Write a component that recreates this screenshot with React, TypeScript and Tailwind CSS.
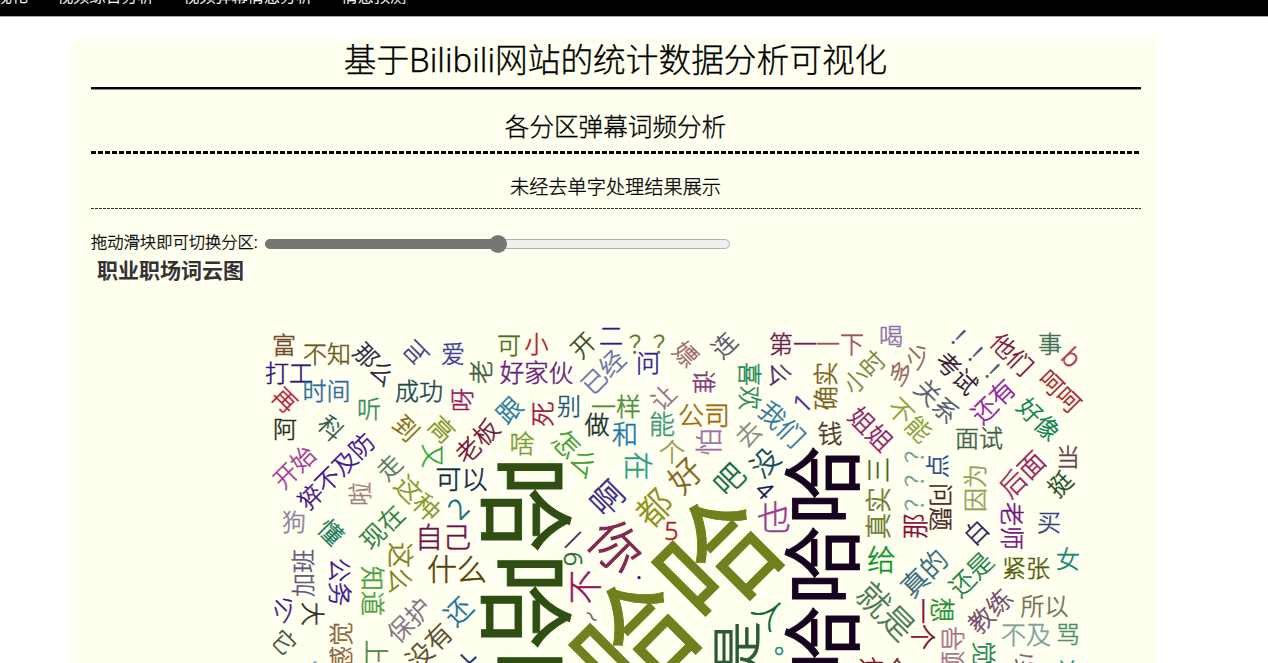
type Word = [text: string, x: number, y: number, size: number, angle: number, color: string];

const words: Word[] = [
  ['哈哈哈', 526.5, 602, 97, 90, '#2f4f12'],
  ['哈哈哈', 822, 565, 80, -90, '#17031f'],
  ['哈哈哈', 634, 640, 117, -45, '#6e811c'],
  ['是', 737, 647, 51, -90, '#2c5a38'],
  ['你', 616, 546, 51, 45, '#84284e'],
  ['富', 284, 345, 24, 0, '#704a28'],
  ['不知', 327, 354, 24, 0, '#6b5a18'],
  ['那么', 375, 364, 24, 45, '#23243f'],
  ['叫', 416, 353, 24, -45, '#3c3f80'],
  ['爱', 453, 354, 24, 0, '#3b3f98'],
  ['老', 481, 372, 24, -90, '#3f6040'],
  ['打工', 289, 373, 24, 0, '#33137a'],
  ['时间', 326.5, 391, 24, 0, '#2a6c9e'],
  ['成功', 419, 391, 24, 0, '#1b4a55'],
  ['呀', 462, 400, 24, -90, '#98185a'],
  ['再', 285, 400, 24, 45, '#b5203c'],
  ['听', 369, 409, 24, 0, '#35905f'],
  ['跟', 509, 410, 25, -45, '#2078a0'],
  ['阿', 285, 429, 24, 0, '#1c3014'],
  ['科', 331, 428, 24, 45, '#2f5a48'],
  ['到', 406, 428, 25, 45, '#8a6c0c'],
  ['高', 442, 429, 25, 45, '#7a9420'],
  ['老板', 477, 441, 25, -45, '#701038'],
  ['又', 433, 456, 24, 90, '#30a030'],
  ['开始', 294, 467, 24, -45, '#a03a98'],
  ['猝不及防', 336, 471, 24, -45, '#401090'],
  ['走', 389, 467, 24, -45, '#4c7860'],
  ['可以', 461.5, 479.5, 26, 0, '#0a2848'],
  ['啦', 360, 494, 24, -90, '#a07c78'],
  ['这种', 418, 498, 26, 45, '#849828'],
  ['2', 458, 508, 28, -45, '#107080'],
  ['狗', 294, 522, 24, 0, '#8a7fa0'],
  ['懂', 331, 532, 24, 45, '#187858'],
  ['现在', 382, 527, 25, -45, '#2a8038'],
  ['自己', 443, 537, 28, 0, '#6e0e48'],
  ['什么', 457, 569, 30, 0, '#574003'],
  ['这么', 401, 568, 26, 90, '#808010'],
  ['加班', 303, 573, 24, -90, '#5c5480'],
  ['公务', 340.5, 582, 24, 90, '#3a1090'],
  ['知道', 372, 591, 25, 90, '#48a038'],
  ['少', 284, 608, 24, -45, '#341090'],
  ['大', 313, 614, 24, 90, '#2c2c20'],
  ['保护', 409, 620, 25, -45, '#807088'],
  ['还', 458, 611, 27, -45, '#1a7098'],
  ['没有', 429, 646, 26, -45, '#584820'],
  ['感觉', 340.5, 646, 24, -90, '#8a6038'],
  ['上', 376, 652, 25, 90, '#48803a'],
  ['它', 284, 642, 24, 45, '#405838'],
  ['人', 308, 669, 24, 45, '#6898a8'],
  ['大', 467, 666, 28, 45, '#103080'],
  ['可', 509, 345, 24, 0, '#4a7020'],
  ['小', 536.5, 344, 24, 0, '#b02020'],
  ['开', 583, 345, 24, -45, '#2c4c14'],
  ['二', 611, 335.5, 24, 0, '#301890'],
  ['？？', 653, 343.5, 24, 0, '#587820'],
  ['问', 648, 363, 24, 0, '#2c20a0'],
  ['已经', 603, 372, 25, -45, '#6870a8'],
  ['嫖', 686, 354, 24, 45, '#a06868'],
  ['连', 724, 345, 24, -45, '#58546c'],
  ['好家伙', 536.5, 373, 24.5, 0, '#682080'],
  ['谁', 704, 382, 24, 90, '#803878'],
  ['让', 663, 397, 24, -45, '#906890'],
  ['别', 569, 406, 24, 0, '#1f5878'],
  ['死', 542, 414, 25, -90, '#98103c'],
  ['做', 597, 424, 25, 0, '#183028'],
  ['一样', 616, 406, 25, 0, '#509038'],
  ['公司', 704, 415, 26, 0, '#a0680c'],
  ['能', 662, 424, 26, 0, '#409878'],
  ['和', 625, 434, 26, 0, '#1878a8'],
  ['怕', 709, 442, 27, -90, '#a070a8'],
  ['啥', 522, 443, 25, 0, '#78a030'],
  ['怎么', 576, 453, 27, 45, '#40a030'],
  ['个', 672, 452, 26, 0, '#989848'],
  ['在', 638, 466, 29, 90, '#2c9c84'],
  ['好', 685, 475, 33, -45, '#88641c'],
  ['吧', 729, 479, 30, -45, '#0c6840'],
  ['啊', 607, 498, 33, -45, '#382888'],
  ['都', 654, 508, 35, -45, '#909018'],
  ['5', 671.5, 530, 25, 0, '#b81828'],
  ['一', 573, 540, 24, -45, '#482850'],
  ['6', 574, 559, 26, 90, '#287030'],
  ['不', 585, 587, 35, -90, '#981460'],
  ['.', 639, 568, 28, 0, '#180c80'],
  ['~', 592, 616, 25, 45, '#706078'],
  ['第一', 793, 344, 24, 0, '#702050'],
  ['一下', 840, 344, 24, 0, '#a05058'],
  ['喝', 891, 336, 24, 0, '#8c74a8'],
  ['么', 781, 375, 24, 90, '#482058'],
  ['喜欢', 750, 386, 24, 90, '#208850'],
  ['确实', 826, 386, 24.5, -90, '#786018'],
  ['小时', 864, 372, 24, -45, '#788840'],
  ['1', 802, 403, 26, -45, '#502890'],
  ['我们', 782, 424, 26, 45, '#3078a0'],
  ['钱', 830, 433, 25, 0, '#4c3828'],
  ['姐姐', 871, 429, 25, 45, '#901868'],
  ['去', 748, 434, 25, -45, '#808880'],
  ['没', 765, 462, 28, -45, '#0c4858'],
  ['4', 765, 490, 24, 45, '#101c58'],
  ['三', 878, 470, 26, -90, '#3c6010'],
  ['真实', 878, 513, 26, -90, '#687828'],
  ['不能', 910, 420, 25, 45, '#88a038'],
  ['多少', 909, 364, 24, -45, '#906058'],
  ['？？？', 914, 475, 24, -90, '#70a098'],
  ['那', 915, 526, 26, -90, '#880830'],
  ['问题', 941, 507, 24, 90, '#481c20'],
  ['点', 937, 466, 24, -90, '#184488'],
  ['也', 774, 517, 34, 0, '#a03c90'],
  ['给', 881.5, 560, 29, 0, '#089828'],
  ['就是', 886, 611, 33, 45, '#487850'],
  ['人', 770, 613, 31, 45, '#086830'],
  ['。', 787, 643, 26, 0, '#208870'],
  ['这个', 884, 670, 26, 0, '#701828'],
  ['真的', 924, 573, 27, -45, '#30687c'],
  ['！！！', 980, 358, 24, 45, '#485878'],
  ['考试', 957, 373, 24, 45, '#301030'],
  ['关系', 937, 401, 25, 45, '#505870'],
  ['他们', 1012, 354, 24, 45, '#801040'],
  ['事', 1050, 344, 24, 0, '#407058'],
  ['b', 1072, 357, 26, 45, '#b83850'],
  ['呵呵', 1060, 391, 24, 45, '#a82428'],
  ['还有', 993, 401, 25, -45, '#9018a0'],
  ['好像', 1039, 419, 24, 45, '#088050'],
  ['面试', 979, 438, 24, 0, '#406044'],
  ['当', 1068, 457, 24, 0, '#684050'],
  ['挺', 1060, 484, 24, -45, '#184820'],
  ['后面', 1022, 474, 26, -45, '#982058'],
  ['因为', 975, 488, 24, -90, '#90a050'],
  ['白', 976, 532, 24, -45, '#242050'],
  ['老师', 1012.5, 526, 24, 90, '#701080'],
  ['买', 1049, 522, 24, 0, '#304080'],
  ['女', 1068, 559, 24, 0, '#108870'],
  ['紧张', 1026, 568, 24, 0, '#506008'],
  ['还是', 971, 574, 25, -45, '#188048'],
  ['想', 942, 610, 25, 90, '#209028'],
  ['一个', 923, 624, 26, 90, '#800828'],
  ['教练', 990, 611, 25, -45, '#704868'],
  ['所以', 1044.5, 606, 24, 0, '#70704c'],
  ['不及', 1026, 634, 25, 0, '#80a098'],
  ['骂', 1068, 634, 24, 0, '#489068'],
  ['领导', 952, 651, 25, -90, '#a07080'],
  ['觉得', 984, 665, 24, 90, '#208050'],
  ['公', 1025, 664, 24, -45, '#805070'],
  ['前', 1067, 672, 24, 0, '#108870'],
];

const CLOUD_X = 91;
const CLOUD_Y = 287;

function WordCloud() {
  return (
    <svg className="block h-[376px] w-[1050px] font-light" viewBox={`${CLOUD_X} ${CLOUD_Y} 1050 376`}>
      {words.map(([text, x, y, size, angle, color], i) => (
        <text
          key={i}
          transform={`translate(${x} ${y}) rotate(${angle})`}
          y={size * 0.38}
          fontSize={size}
          fill={color}
          stroke={color}
          strokeWidth={size > 70 ? 0.9 : size > 50 ? 1.1 : 0.5}
          textAnchor="middle"
          className={size > 70 ? 'font-normal' : undefined}
        >
          {text}
        </text>
      ))}
    </svg>
  );
}

function Slider() {
  return (
    <div className="relative ml-[7px] mt-[3px] flex h-[18px] w-[465px] items-center">
      <div className="h-[10px] w-full rounded-full border border-[#b2b2b2] bg-[#efefef]" />
      <div className="absolute left-0 top-[4px] h-[10px] w-[232px] rounded-l-full bg-[#767676]" />
      <div className="absolute left-[224px] top-0 size-[18px] rounded-full bg-[#767676]" />
    </div>
  );
}

const nav = ['数据可视化', '视频综合分析', '视频弹幕情感分析', '情感预测'];

export default function App() {
  return (
    <div className="h-[663px] w-[1268px] overflow-hidden bg-white font-['Noto_Sans','Noto_Sans_CJK_SC',sans-serif] font-light text-black [-webkit-text-stroke-width:0.3px]">
      <nav className="flex h-[17px] gap-[29px] overflow-hidden border-b border-[#a8a8a8] bg-black text-[16.2px] leading-[24px] text-white">
        {nav.map((label, i) => (
          <a key={label} className={i === 0 ? '-ml-[53px] -mt-[16px] shrink-0' : '-mt-[16px] shrink-0'}>
            {label}
          </a>
        ))}
      </nav>
      <main className="ml-[73px] mt-[21px] h-[625px] w-[1084px] overflow-hidden bg-[#fffff0] pl-[18px] pr-[16px]">
        <h1 className="flex h-[49px] items-center justify-center pb-[5px] pr-px text-[32.7px] leading-none">
          基于Bilibili网站的统计数据分析可视化
        </h1>
        <div className="h-[3px] border-t-2 border-black bg-[#8a8a84]" />
        <h2 className="flex h-[61px] items-center justify-center pr-px pt-[14px] text-[24.6px] leading-none">各分区弹幕词频分析</h2>
        <div className="h-[3px] bg-[repeating-linear-gradient(90deg,#000_0_5px,transparent_5px_7px)]" />
        <h3 className="flex h-[54px] items-center justify-center pr-px pt-[12px] text-[19.2px] leading-none">未经去单字处理结果展示</h3>
        <div className="h-px bg-[repeating-linear-gradient(90deg,#333_0_3px,transparent_3px_4px)]" />
        <div className="mt-[22px] flex h-[22px] items-center">
          <label className="whitespace-nowrap text-[16.3px] leading-none">拖动滑块即可切换分区:</label>
          <Slider />
        </div>
        <div className="flex h-[34px] items-center pl-[6px] text-[21px] font-bold leading-none text-[#333] [-webkit-text-stroke-width:0px]">职业职场词云图</div>
        <WordCloud />
      </main>
    </div>
  );
}
